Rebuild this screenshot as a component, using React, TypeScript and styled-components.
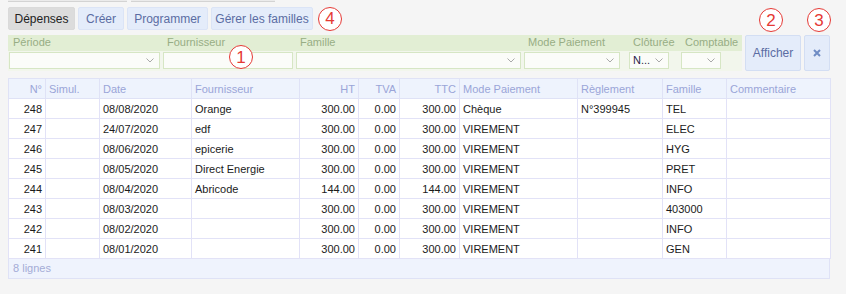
import React from 'react';
import styled, {createGlobalStyle} from 'styled-components';

// ==================== 数据 ====================

interface Depense {
    num: number;
    date: string;
    fournisseur: string;
    ht: string;
    tva: string;
    ttc: string;
    mode: string;
    reglement: string;
    famille: string;
}

const ROWS: Depense[] = [
    {num: 248, date: '08/08/2020', fournisseur: 'Orange', ht: '300.00', tva: '0.00', ttc: '300.00', mode: 'Chèque', reglement: 'N°399945', famille: 'TEL'},
    {num: 247, date: '24/07/2020', fournisseur: 'edf', ht: '300.00', tva: '0.00', ttc: '300.00', mode: 'VIREMENT', reglement: '', famille: 'ELEC'},
    {num: 246, date: '08/06/2020', fournisseur: 'epicerie', ht: '300.00', tva: '0.00', ttc: '300.00', mode: 'VIREMENT', reglement: '', famille: 'HYG'},
    {num: 245, date: '08/05/2020', fournisseur: 'Direct Energie', ht: '300.00', tva: '0.00', ttc: '300.00', mode: 'VIREMENT', reglement: '', famille: 'PRET'},
    {num: 244, date: '08/04/2020', fournisseur: 'Abricode', ht: '144.00', tva: '0.00', ttc: '144.00', mode: 'VIREMENT', reglement: '', famille: 'INFO'},
    {num: 243, date: '08/03/2020', fournisseur: '', ht: '300.00', tva: '0.00', ttc: '300.00', mode: 'VIREMENT', reglement: '', famille: '403000'},
    {num: 242, date: '08/02/2020', fournisseur: '', ht: '300.00', tva: '0.00', ttc: '300.00', mode: 'VIREMENT', reglement: '', famille: 'INFO'},
    {num: 241, date: '08/01/2020', fournisseur: '', ht: '300.00', tva: '0.00', ttc: '300.00', mode: 'VIREMENT', reglement: '', famille: 'GEN'},
];

// 表格列：标题、宽度、是否右对齐
const COLUMNS = [
    {label: 'N°', w: 37, right: true},
    {label: 'Simul.', w: 54},
    {label: 'Date', w: 92},
    {label: 'Fournisseur', w: 108},
    {label: 'HT', w: 59, right: true},
    {label: 'TVA', w: 41, right: true},
    {label: 'TTC', w: 60, right: true},
    {label: 'Mode Paiement', w: 118},
    {label: 'Règlement', w: 85},
    {label: 'Famille', w: 64},
    {label: 'Commentaire', w: 104},
];

// 筛选字段
const FILTERS = [
    {label: 'Période', inputW: 151, select: true},
    {label: 'Fournisseur', inputW: 130},
    {label: 'Famille', inputW: 225, select: true},
    {label: 'Mode Paiement', inputW: 96, select: true},
    {label: 'Clôturée', inputW: 40, select: true, value: 'N...'},
    {label: 'Comptable', inputW: 40, select: true},
];

// ==================== 样式 ====================

const GlobalStyle = createGlobalStyle`
  body {
    margin: 0;
    background: #f5f5f5;
    font-family: "Liberation Sans", Arial, sans-serif;
    font-size: 11px;
    color: #1b1b1b;
  }
`;

const Page = styled.div`
  padding: 0 8px;
  width: 822px;
`;

const TopStrip = styled.div`
  display: flex;
  gap: 4px;
  height: 2px;
`;

const StripBox = styled.div<{ $w: number }>`
  width: ${p => p.$w}px;
  background: #ebebeb;
  border-bottom: 1px solid #d3d3d3;
`;

const Toolbar = styled.div`
  display: flex;
  align-items: center;
  gap: 3px;
  margin-top: 5px;
  height: 23px;
`;

const TabButton = styled.button<{ $active?: boolean; $w: number }>`
  width: ${p => p.$w}px;
  height: 23px;
  padding: 0;
  font-family: inherit;
  font-size: 12px;
  border-radius: 2px;
  border: 1px solid ${p => p.$active ? '#dadada' : '#dbe4f6'};
  background: ${p => p.$active ? '#dcdcdc' : '#e4ecfa'};
  color: ${p => p.$active ? '#222' : '#5b6ca3'};
`;

const Marker = styled.span`
  display: inline-flex;
  align-items: center;
  justify-content: center;
  width: 22px;
  height: 22px;
  border: 1.5px solid #e53935;
  border-radius: 50%;
  background: #fff;
  color: #e53935;
  font-family: "Liberation Sans", Arial, sans-serif;
  font-size: 17px;
  line-height: 1;
`;

const FloatMarker = styled(Marker)`
  position: absolute;
`;

const FilterRow = styled.div`
  position: relative;
  display: flex;
  margin-top: 5px;
  height: 36px;
`;

const FilterPanel = styled.div`
  display: grid;
  grid-template-columns: 154px 133px 228px 105px 52px 1fr;
  width: 733px;
  padding-left: 1px;
  background: linear-gradient(to bottom, #e2eed4 0 16px, #f2f6ec 16px);
`;

const Field = styled.div`
  display: flex;
  flex-direction: column;
`;

const FieldLabel = styled.span`
  height: 16px;
  line-height: 15px;
  padding-left: 4px;
  font-size: 11px;
  color: #97ad84;
  white-space: nowrap;
`;

const FieldInput = styled.div<{ $w: number }>`
  position: relative;
  box-sizing: border-box;
  width: ${p => p.$w}px;
  height: 17px;
  margin-top: 1px;
  padding-left: 3px;
  background: #fbfcf9;
  border: 1px solid #d6e6c4;
  font-size: 11px;
  line-height: 15px;
  color: #2a1f4a;
`;

const Chevron = styled.svg`
  position: absolute;
  right: 5px;
  top: 5px;
`;

const SideButton = styled.button<{ $w: number }>`
  width: ${p => p.$w}px;
  height: 36px;
  margin-left: 3px;
  padding: 0;
  font-family: inherit;
  font-size: 12px;
  border: 1px solid #d3def3;
  border-radius: 2px;
  background: #e4ecfa;
  color: #5b6ca3;
  display: flex;
  align-items: center;
  justify-content: center;
`;

const Grid = styled.table`
  margin-top: 7px;
  border-collapse: collapse;
  table-layout: fixed;
  width: 822px;
  background: #fff;
`;

const HeadCell = styled.th<{ $right?: boolean }>`
  height: 19px;
  padding: 0 3px;
  border: 1px solid #dfe2f6;
  background: #eef3fd;
  color: #9aa5d8;
  font-weight: normal;
  font-size: 11px;
  text-align: ${p => p.$right ? 'right' : 'left'};
  white-space: nowrap;
  overflow: hidden;
`;

const Cell = styled.td<{ $right?: boolean }>`
  height: 19px;
  padding: 0 3px;
  border: 1px solid #e2e2f7;
  text-align: ${p => p.$right ? 'right' : 'left'};
  white-space: nowrap;
  overflow: hidden;
`;

const Footer = styled.div`
  box-sizing: border-box;
  width: 822px;
  height: 20px;
  padding-left: 4px;
  line-height: 19px;
  background: #eff3fd;
  border: 1px solid #dfe2f6;
  border-top: none;
  color: #a4acd6;
`;

// ==================== 子组件 ====================

const ChevronIcon: React.FC = () => (
    <Chevron width="8" height="5" viewBox="0 0 8 5">
        <polyline points="0.5,0.5 4,4 7.5,0.5" fill="none" stroke="#a9a9a9" strokeWidth="1"/>
    </Chevron>
);

// ==================== 主组件 ====================

const App: React.FC = () => {
    return (
        <Page>
            <GlobalStyle/>
            <TopStrip>
                <StripBox $w={119}/>
                <StripBox $w={144}/>
            </TopStrip>

            <Toolbar>
                <TabButton $active $w={67}>Dépenses</TabButton>
                <TabButton $w={46}>Créer</TabButton>
                <TabButton $w={81}>Programmer</TabButton>
                <TabButton $w={102}>Gérer les familles</TabButton>
                <Marker style={{marginLeft: 2}}>4</Marker>
            </Toolbar>

            <FilterRow>
                <FilterPanel>
                    {FILTERS.map(f => (
                        <Field key={f.label}>
                            <FieldLabel>{f.label}</FieldLabel>
                            <FieldInput $w={f.inputW}>
                                {f.value}
                                {f.select && <ChevronIcon/>}
                            </FieldInput>
                        </Field>
                    ))}
                </FilterPanel>
                <SideButton $w={56}>Afficher</SideButton>
                <SideButton $w={26}>
                    <svg width="8" height="8" viewBox="0 0 8 8">
                        <path d="M1 1 L7 7 M7 1 L1 7" stroke="#6f8cc4" strokeWidth="2"/>
                    </svg>
                </SideButton>
                <FloatMarker style={{left: 221, top: 10}}>1</FloatMarker>
                <FloatMarker style={{left: 751, top: -27}}>2</FloatMarker>
                <FloatMarker style={{left: 799, top: -27}}>3</FloatMarker>
            </FilterRow>

            <Grid>
                <colgroup>
                    {COLUMNS.map(c => <col key={c.label} style={{width: c.w}}/>)}
                </colgroup>
                <thead>
                <tr>
                    {COLUMNS.map(c => <HeadCell key={c.label} $right={c.right}>{c.label}</HeadCell>)}
                </tr>
                </thead>
                <tbody>
                {ROWS.map(r => (
                    <tr key={r.num}>
                        <Cell $right>{r.num}</Cell>
                        <Cell/>
                        <Cell>{r.date}</Cell>
                        <Cell>{r.fournisseur}</Cell>
                        <Cell $right>{r.ht}</Cell>
                        <Cell $right>{r.tva}</Cell>
                        <Cell $right>{r.ttc}</Cell>
                        <Cell>{r.mode}</Cell>
                        <Cell>{r.reglement}</Cell>
                        <Cell>{r.famille}</Cell>
                        <Cell/>
                    </tr>
                ))}
                </tbody>
            </Grid>
            <Footer>{ROWS.length} lignes</Footer>
        </Page>
    );
};

export default App;
